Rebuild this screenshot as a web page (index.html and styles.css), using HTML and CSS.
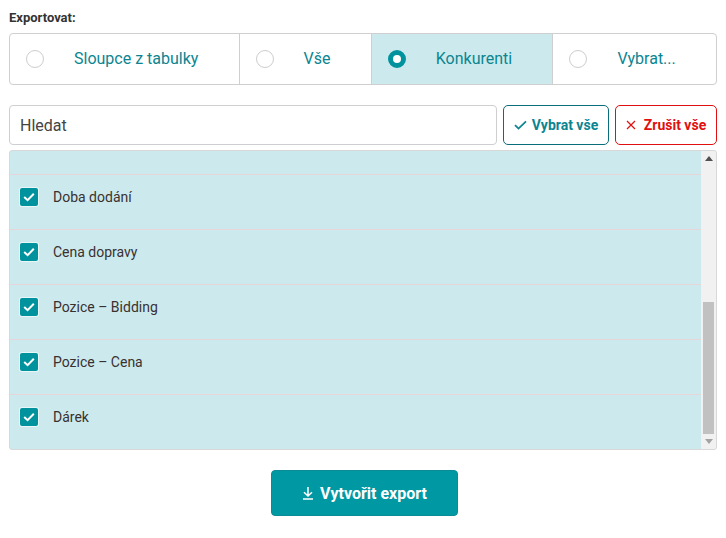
FILE: index.html
```html
<!DOCTYPE html>
<html lang="cs">
<head>
<meta charset="utf-8">
<link rel="stylesheet" href="styles.css">
</head>
<body>
<div class="page">
  <div class="label">Exportovat:</div>
  <div class="segments">
    <div class="seg"><span class="radio"></span><span class="seg-text">Sloupce z tabulky</span></div>
    <div class="seg"><span class="radio"></span><span class="seg-text">Vše</span></div>
    <div class="seg seg-active"><span class="radio radio-on"></span><span class="seg-text">Konkurenti</span></div>
    <div class="seg"><span class="radio"></span><span class="seg-text">Vybrat...</span></div>
  </div>

  <div class="search-row">
    <div class="search">Hledat</div>
    <button class="btn btn-select">
      <svg width="13" height="10" viewBox="0 0 13 10"><path d="M1 5.2 L4.5 8.6 L12 1.4" fill="none" stroke="currentColor" stroke-width="1.8"/></svg>
      Vybrat vše
    </button>
    <button class="btn btn-clear">
      <svg width="10" height="10" viewBox="0 0 10 10"><path d="M1 1 L9 9 M9 1 L1 9" fill="none" stroke="currentColor" stroke-width="1.2"/></svg>
      Zrušit vše
    </button>
  </div>

  <div class="list">
    <div class="rows">
      <div class="partial"></div>
      <div class="row"><span class="check"><svg width="12" height="10" viewBox="0 0 12 10"><path d="M1.2 5 L4.6 8.2 L10.8 1.8" fill="none" stroke="#fff" stroke-width="2"/></svg></span><span class="row-text">Doba dodání</span></div>
      <div class="row"><span class="check"><svg width="12" height="10" viewBox="0 0 12 10"><path d="M1.2 5 L4.6 8.2 L10.8 1.8" fill="none" stroke="#fff" stroke-width="2"/></svg></span><span class="row-text">Cena dopravy</span></div>
      <div class="row"><span class="check"><svg width="12" height="10" viewBox="0 0 12 10"><path d="M1.2 5 L4.6 8.2 L10.8 1.8" fill="none" stroke="#fff" stroke-width="2"/></svg></span><span class="row-text">Pozice – Bidding</span></div>
      <div class="row"><span class="check"><svg width="12" height="10" viewBox="0 0 12 10"><path d="M1.2 5 L4.6 8.2 L10.8 1.8" fill="none" stroke="#fff" stroke-width="2"/></svg></span><span class="row-text">Pozice – Cena</span></div>
      <div class="row"><span class="check"><svg width="12" height="10" viewBox="0 0 12 10"><path d="M1.2 5 L4.6 8.2 L10.8 1.8" fill="none" stroke="#fff" stroke-width="2"/></svg></span><span class="row-text">Dárek</span></div>
    </div>
    <div class="scrollbar">
      <div class="sb-btn"><svg width="8" height="5" viewBox="0 0 8 5"><path d="M0 5 L4 0 L8 5 Z" fill="#505050"/></svg></div>
      <div class="sb-track"><div class="sb-thumb"></div></div>
      <div class="sb-btn"><svg width="8" height="5" viewBox="0 0 8 5"><path d="M0 0 L8 0 L4 5 Z" fill="#a3a3a3"/></svg></div>
    </div>
  </div>

  <div class="actions">
    <button class="export">
      <svg width="12" height="14" viewBox="0 0 12 14"><path d="M6 1 V10 M2 6.2 L6 10 L10 6.2 M1 13 H11" fill="none" stroke="#fff" stroke-width="1.5"/></svg>
      Vytvořit export
    </button>
  </div>
</div>
</body>
</html>
```

FILE: styles.css
```css
* { box-sizing: border-box; }
body {
  margin: 0;
  font-family: Roboto, "Liberation Sans", sans-serif;
  color: #333;
  background: #fff;
}
.page {
  padding: 10px 9px 0 9px;
  width: 726px;
}
.label {
  font-size: 13px;
  font-weight: 700;
  line-height: 16px;
  color: #333;
  height: 23px;
}
.segments {
  display: flex;
  height: 52px;
  border: 1px solid #cfcfcf;
  border-radius: 4px;
  overflow: hidden;
}
.seg {
  flex: 1 1 auto;
  display: flex;
  align-items: center;
  gap: 30px;
  padding: 0 40px 1px 16px;
  border-left: 1px solid #cfcfcf;
}
.seg:first-child { border-left: none; }
.seg-active { background: #cceaed; }
.radio {
  width: 18px;
  height: 18px;
  border-radius: 50%;
  border: 1px solid #cdcdcd;
  background: #fff;
  flex: none;
}
.radio-on {
  border: 5px solid #00939e;
  background: #fff;
}
.seg-text {
  font-size: 16px;
  color: #0b8591;
  white-space: nowrap;
}
.search-row {
  display: flex;
  gap: 6px;
  margin-top: 20px;
  height: 40px;
}
.search {
  flex: 1;
  border: 1px solid #cfcfcf;
  border-radius: 4px;
  display: flex;
  align-items: center;
  padding-left: 10px;
  font-size: 16px;
  color: #444;
}
.btn {
  font-family: Roboto, "Liberation Sans", sans-serif;
  font-size: 14px;
  font-weight: 700;
  background: #fff;
  border-radius: 5px;
  display: flex;
  align-items: center;
  justify-content: center;
  padding: 0;
  cursor: pointer;
}
.btn-select {
  width: 106px;
  gap: 5px;
  border: 1px solid #0a6d7a;
  color: #0b8591;
}
.btn-clear {
  width: 102px;
  gap: 8px;
  border: 1px solid #e01010;
  color: #e01010;
}
.list {
  display: flex;
  margin-top: 5px;
  height: 300px;
  border: 1px solid #d8d8d8;
  border-radius: 3px;
  background: #cceaed;
  overflow: hidden;
}
.rows {
  flex: 1;
  overflow: hidden;
}
.partial { height: 23px; }
.row {
  height: 55px;
  border-top: 1px solid #e7d6d9;
  display: flex;
  align-items: flex-start;
  gap: 15px;
  padding: 13px 0 0 10px;
}
.check {
  width: 18px;
  height: 18px;
  border-radius: 2px;
  background: #00939e;
  box-shadow: 0 0 0 1px #e8f7f8;
  display: flex;
  align-items: center;
  justify-content: center;
  flex: none;
}
.row-text {
  font-size: 14px;
  line-height: 18px;
  color: #3a3030;
}
.scrollbar {
  width: 15px;
  background: #f1f1f1;
  display: flex;
  flex-direction: column;
}
.sb-btn {
  height: 15px;
  display: flex;
  align-items: center;
  justify-content: center;
}
.sb-track {
  flex: 1;
  display: flex;
  flex-direction: column;
  justify-content: flex-end;
}
.sb-thumb {
  height: 132px;
  margin: 0 2px;
  background: #c1c1c1;
}
.actions {
  display: flex;
  justify-content: center;
  margin-top: 20px;
}
.export {
  width: 187px;
  height: 46px;
  margin-left: 3px;
  background: #0098a3;
  border: 1px solid #0a8b95;
  border-radius: 4px;
  color: #fff;
  font-family: Roboto, "Liberation Sans", sans-serif;
  font-size: 16px;
  font-weight: 700;
  display: flex;
  align-items: center;
  justify-content: center;
  gap: 6px;
  padding: 0;
}
```
